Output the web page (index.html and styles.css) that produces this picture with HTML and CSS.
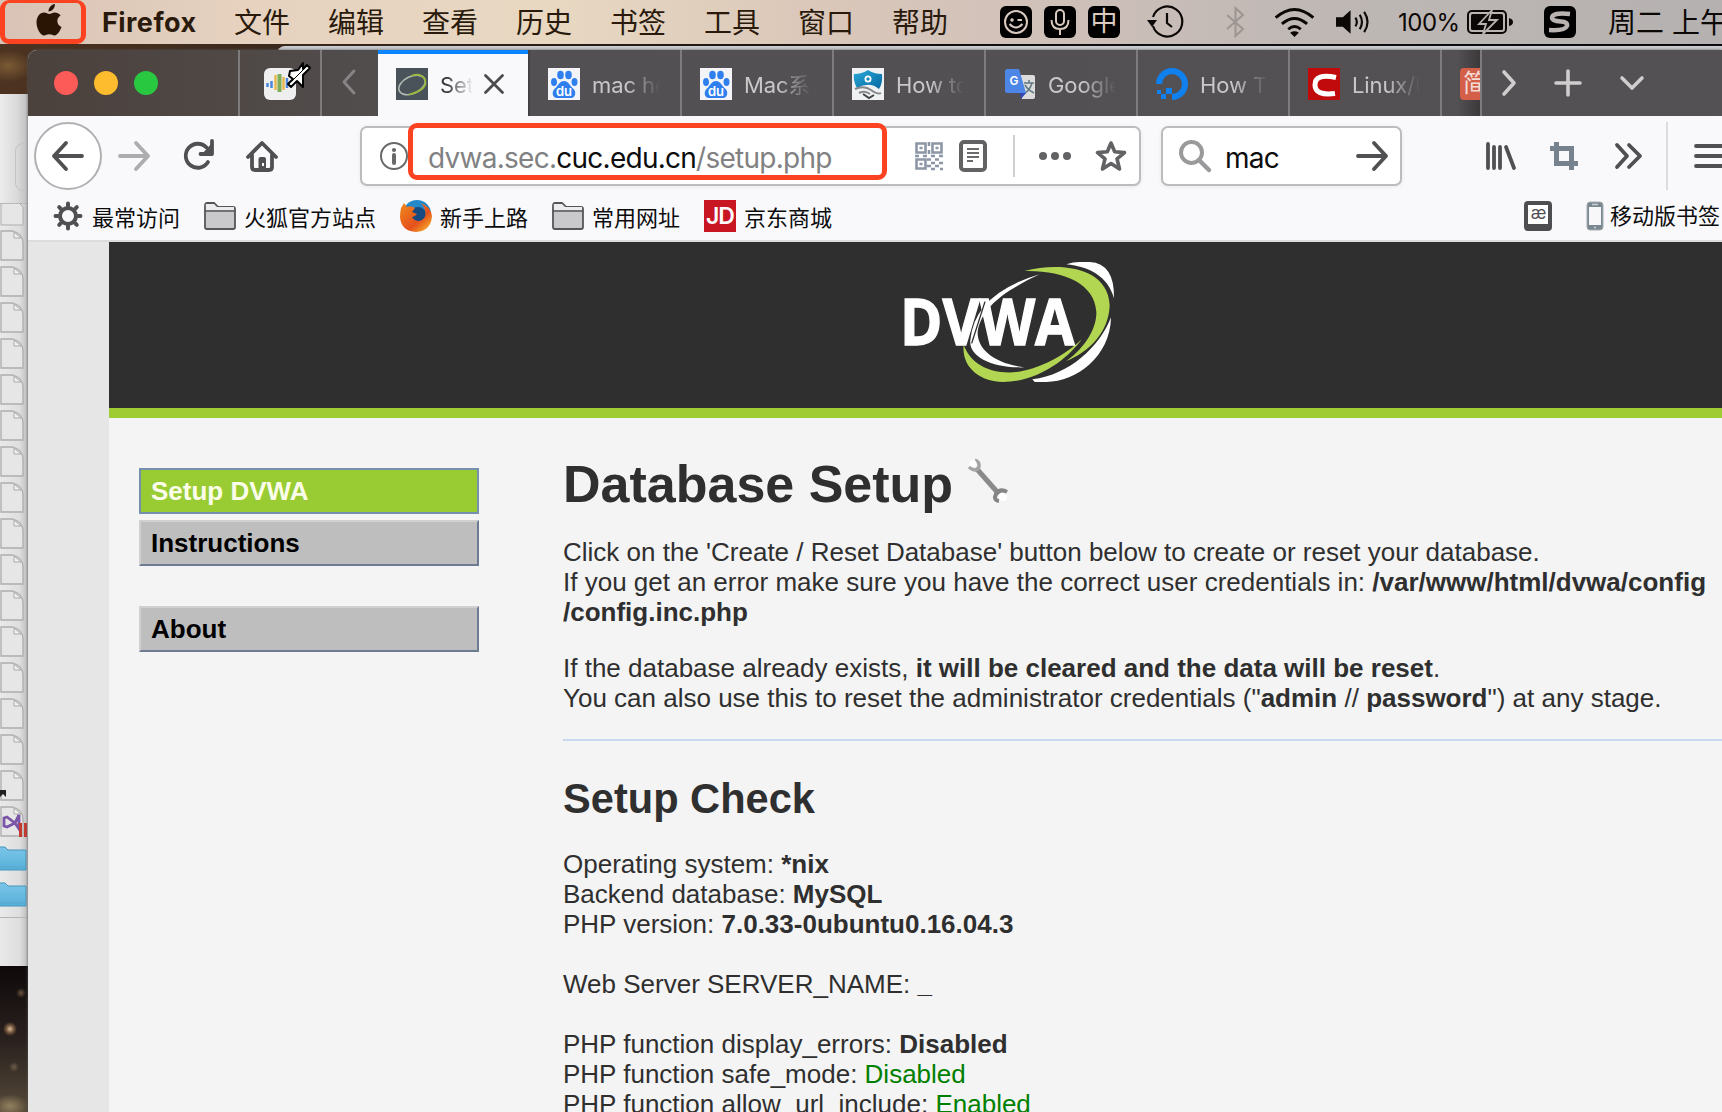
FILE: index.html
```
<!DOCTYPE html>
<html lang="zh-CN">
<head>
<meta charset="utf-8">
<title>Database Setup</title>
<link rel="stylesheet" href="styles.css">
</head>
<body>
<svg class="defs" width="0" height="0">
  <defs>
    <linearGradient id="blueFolder" x1="0" y1="0" x2="0" y2="1"><stop offset="0" stop-color="#7cc6ea"/><stop offset="1" stop-color="#55afd8"/></linearGradient>
    <linearGradient id="shield" x1="0" y1="0" x2="1" y2="1"><stop offset="0" stop-color="#2ba9d8"/><stop offset="1" stop-color="#0568a0"/></linearGradient>
    <linearGradient id="fox" x1="0" y1="0" x2="1" y2="1"><stop offset="0" stop-color="#f08a1c"/><stop offset=".6" stop-color="#e5501d"/><stop offset="1" stop-color="#fbc62c"/></linearGradient>
    <symbol id="file" viewBox="0 0 24 31"><path d="M1 1H13Q23 4 23 13V30H1Z" fill="#e6e6e6" stroke="#adadad" stroke-width="1.3"/><path d="M14 2V8H21Z" fill="#f1f1f1" stroke="#aaa"/></symbol>
    <symbol id="bfolder" viewBox="0 0 28 25"><path d="M-2 1H5L8 4H26V24H-2Z" fill="url(#blueFolder)" stroke="#4696bb"/><path d="M-2 21H26" stroke="#5ba5c8"/></symbol>
    <symbol id="folder" viewBox="0 0 32 28"><path d="M1 4Q1 1 3 1H10L14 5H29Q31 5 31 7V25Q31 27 29 27H3Q1 27 1 25Z" fill="#c9c9cb" stroke="#555557" stroke-width="1.8"/><path d="M1.8 2H10L13 5H30V8H2Z" fill="#ececee"/><path d="M1 9H31" stroke="#555557" stroke-width="1.6"/></symbol>
    <symbol id="baidu" viewBox="0 0 32 32"><path d="M0 0H32V32H0Z" fill="#f2f4f8"/><g fill="#2f80ee"><ellipse cx="12.5" cy="7" rx="3.3" ry="4.2"/><ellipse cx="20.5" cy="7" rx="3.3" ry="4.2"/><ellipse cx="6" cy="14" rx="3" ry="4"/><ellipse cx="26.5" cy="14" rx="3" ry="4"/><path d="M16 13C20 13 21 16 24 19.500C29 23 28 30 23 30H9C4 30 3 23 8 19.500C11 16 12 13 16 13Z"/></g><text x="16" y="28" text-anchor="middle" font-family="Inter" font-weight="600" font-size="13" fill="#fff">du</text></symbol>
  </defs>
</svg>

<header class="menubar">
  <svg class="apple" viewBox="0 0 26 32"><path d="M19 0C19 4 16 7.500 12.500 7.500C12.500 3.500 15.500 .5 19 0ZM18.500 8.500C21 8.500 23.300 9.800 24.600 11.600C19.700 14.600 20.600 21 25.500 23C24.500 26 21.500 31.500 18.500 31.500C16.500 31.500 15.800 30.300 13.300 30.300C10.800 30.300 10 31.500 8 31.500C4.500 31.500 .5 24.500 .5 18.500C.5 12.500 4 8.500 8 8.500C10.300 8.500 11.800 10 13.500 10C15 10 16.500 8.500 18.500 8.500Z" fill="#2a1505"/></svg>
  <b class="app">Firefox</b>
  <nav class="menus"><span>文件</span><span>编辑</span><span>查看</span><span>历史</span><span>书签</span><span>工具</span><span>窗口</span><span>帮助</span></nav>
  <div class="ime">
    <svg viewBox="0 0 32 32"><rect width="32" height="32" rx="6"/><circle cx="16" cy="16" r="11" class="l"/><circle cx="12" cy="14" r="1.800" fill="#d9c9bf"/><path d="M17.500 14H22M9.500 18Q16 25 22.500 18" class="l"/></svg>
    <svg viewBox="0 0 32 32"><rect width="32" height="32" rx="6"/><rect x="12" y="4" width="8" height="15" rx="4" class="l"/><path d="M7.500 14Q7.500 23 16 23Q24.500 23 24.500 14M16 23V29" class="l"/></svg>
    <span class="zhong">中</span>
  </div>
  <svg class="clock" viewBox="0 0 36 32" fill="none" stroke="#0c0806" stroke-width="2.200"><path d="M6 20A15 15 0 1 0 6 11" /><path d="M20 7V17L25 21"/><path d="M0 14H10L5 21Z" fill="#0c0806" stroke="none"/></svg>
  <svg class="bt" viewBox="0 0 18 32" fill="none" stroke="#9c9591" stroke-width="2"><path d="M1 9L17 23L9.500 30V2L17 9L1 23"/></svg>
  <svg class="wifi" viewBox="0 0 42 30" fill="none" stroke="#0c0806" stroke-width="3"><path d="M1.500 10Q21-7 40.500 10M8 16.500Q21 5 34 16.500M14.500 22Q21 16.500 27.500 22"/><path d="M16.500 25.500Q21 22.500 25.500 25.500L21 30Z" fill="#0c0806" stroke="none"/></svg>
  <svg class="vol" viewBox="0 0 34 24" fill="none" stroke="#0c0806" stroke-width="2.200"><path d="M0 7H7L15 0V24L7 17H0Z" fill="#0c0806" stroke="none"/><path d="M20 7.500Q23 12 20 16.500M24.500 4.500Q29 12 24.500 19.500M29 1.500Q36 12 29 22.500"/></svg>
  <span class="pct">100%</span>
  <svg class="batt" viewBox="0 0 46 24"><rect x="1" y="1" width="38" height="22" rx="4" fill="none" stroke="#0c0806" stroke-width="2"/><rect x="4" y="4" width="32" height="16" rx="1.500" fill="#0c0806"/><path d="M42 8Q46 9 46 12Q46 15 42 16Z" fill="#0c0806"/><path d="M25 0L12 14H19L16 24L30 10H22Z" fill="#0c0806" stroke="#b9b3b0" stroke-width="1.800"/></svg>
  <svg class="sogou" viewBox="0 0 32 32"><rect width="32" height="32" rx="6"/><path d="M26 8Q8 6 8 12Q8 15 17 15.500Q24 16 23 20Q21 25 5 24" fill="none" stroke="#b8b2b0" stroke-width="4.500"/></svg>
  <span class="date">周二 上午</span>
</header>
<div class="mark mark-apple"></div>

<div class="backwin-edge"></div>
<aside class="finder">
  <div class="finder-bar"></div>
  <svg class="cutfile" viewBox="0 0 24 22"><path d="M1-4V21H23V3L20 0" fill="#e6e6e6" stroke="#adadad"/></svg>
  <div class="files">
    <svg><use href="#file"/></svg><svg><use href="#file"/></svg><svg><use href="#file"/></svg><svg><use href="#file"/></svg><svg><use href="#file"/></svg><svg><use href="#file"/></svg><svg><use href="#file"/></svg><svg><use href="#file"/></svg><svg><use href="#file"/></svg><svg><use href="#file"/></svg><svg><use href="#file"/></svg><svg><use href="#file"/></svg><svg><use href="#file"/></svg><svg><use href="#file"/></svg><svg><use href="#file"/></svg>
    <svg viewBox="0 0 24 31"><use href="#file" width="24" height="31"/><path d="M0 20H6V27L3 24L0 27Z" fill="#222"/></svg>
    <svg class="vs" viewBox="0 0 28 31"><use href="#file" width="24" height="31"/><path d="M4 12L7 11L15 17L19 9V23L15 17L7 21L4 20Z" fill="none" stroke="#7a55a8" stroke-width="2.800"/><path d="M19 17H22V31H19ZM24 17H27V31H24Z" fill="#c43a30"/></svg>
  </div>
  <div class="bfolders"><svg><use href="#bfolder"/></svg><svg><use href="#bfolder"/></svg></div>
</aside>

<main class="window">
  <div class="tabstrip">
    <div class="lights"><i class="r"></i><i class="y"></i><i class="g"></i></div>
    <div class="pinned">
      <svg viewBox="0 0 48 40"><rect x="0" y="6" width="32" height="32" rx="6" fill="#efefef"/><g stroke-width="2.500"><path d="M3.500 21V25M7.500 19V26M23 16V26" stroke="#4c86d8"/><path d="M11.500 13V28M19.500 15V28" stroke="#e6b84e"/><path d="M15.500 12V30" stroke="#7fae5a" stroke-width="4"/></g><path d="M26 9L34 8L39 1V7L43 3L46 6L39 13V25L33 19L27 25L24 22L29 17L25 14Z" fill="#fff" stroke="#000" stroke-width="2" stroke-linejoin="round"/><path d="M28 19L42 5" stroke="#000" stroke-width="1"/></svg>
    </div>
    <div class="scroll-left"><svg viewBox="0 0 14 26"><path d="M12 2L2 13L12 24" fill="none" stroke="#858385" stroke-width="3" stroke-linecap="round" stroke-linejoin="round"/></svg></div>
    <div class="tab active">
      <svg class="fav" viewBox="0 0 32 32"><path d="M0 0H32V32H0Z" fill="#4a525a"/><g fill="none" transform="rotate(-25 16 17)"><ellipse cx="16" cy="17" rx="14" ry="8.500" stroke="#b4bab4" stroke-width="1.600"/><path d="M9 24.500Q30 28 30 17Q29 9 19 8.500" stroke="#98b83c" stroke-width="1.800"/></g></svg>
      <span class="label">Setup</span>
      <svg class="close" viewBox="0 0 20 20"><path d="M1.500 1.500L18.500 18.500M18.500 1.500L1.500 18.500" stroke="#4b4b4d" stroke-width="2.800" stroke-linecap="round"/></svg>
    </div>
    <div class="tab"><svg class="fav"><use href="#baidu"/></svg><span class="label">mac hosts</span></div>
    <div class="tab"><svg class="fav"><use href="#baidu"/></svg><span class="label">Mac系统</span></div>
    <div class="tab"><svg class="fav" viewBox="0 0 32 32"><path d="M0 0H32V32H0Z" fill="#f0f1f2"/><path d="M2 6Q10 6 16 2Q22 6 30 6Q31 15 27 21Q18 13 5 20Q1 13 2 6Z" fill="url(#shield)"/><circle cx="16" cy="11" r="2.600" fill="none" stroke="#fff" stroke-width="1.800"/><path d="M3 21Q12 17 19 22T29 25M7 25Q13 22 18 26" fill="none" stroke="#85878a" stroke-width="2"/><path d="M11 26L17 30L22 27" fill="none" stroke="#444" stroke-width="2"/></svg><span class="label">How to</span></div>
    <div class="tab"><svg class="fav" viewBox="0 0 32 32"><path d="M15 7H29Q31 7 31 9V29Q31 31 29 31H18Z" fill="#dcdcdc"/><path d="M20 15H30M25 12V15M28 15Q26 22 20 26M21 17Q24 22 30 25" fill="none" stroke="#617883" stroke-width="1.500"/><path d="M16 25H22L17 31Z" fill="#3049b5"/><path d="M3 1H15L22 25H3Q1 25 1 23V3Q1 1 3 1Z" fill="#4d86e6"/><text x="10" y="17" text-anchor="middle" font-family="Inter" font-weight="600" font-size="12" fill="#fff">G</text></svg><span class="label">Google</span></div>
    <div class="tab"><svg class="fav" viewBox="0 0 32 32"><path d="M3 16A13 13 0 1 1 16 29" fill="none" stroke="#1080ee" stroke-width="6"/><path d="M10 20H16V26H10ZM5 26H10V31H5ZM1 22H5V26H1Z" fill="#1080ee"/></svg><span class="label">How To</span></div>
    <div class="tab"><svg class="fav" viewBox="0 0 32 32"><path d="M0 0H32V32H0Z" fill="#c00a0c"/><path d="M28 9.500Q7 5 7 17Q7 28 27 25.500" fill="none" stroke="#fff" stroke-width="5"/></svg><span class="label">Linux/Unix</span></div>
    <div class="tab cut"><span class="jian">简</span></div>
    <div class="strip-tools">
      <svg viewBox="0 0 14 26" width="14" height="26"><path d="M2 2L12 13L2 24"/></svg>
      <svg viewBox="0 0 28 28" width="28" height="28"><path d="M14 2V26M2 14H26"/></svg>
      <svg viewBox="0 0 24 16" width="24" height="16"><path d="M2 3L12 13L22 3"/></svg>
    </div>
  </div>

  <div class="navbar">
    <div class="back"><svg viewBox="0 0 32 30" width="32" height="30"><path d="M30 15H2M14 2L2 15L14 28" class="s"/></svg></div>
    <svg class="fwd" viewBox="0 0 32 30"><path d="M2 15H30M18 2L30 15L18 28" class="s"/></svg>
    <svg class="reload" viewBox="0 0 30 30"><path d="M24 21A12 12 0 1 1 22.500 6.500" class="s" stroke-width="3.800"/><path d="M28 0V13H16.500" class="s" stroke-width="3.600"/><path d="M28 2V13H18Z" fill="#505052"/></svg>
    <svg class="home" viewBox="0 0 32 32"><path d="M2 17L16 3L30 17" class="s" stroke-width="3.600"/><path d="M6 15V27Q6 30 9 30H23Q26 30 26 27V15" class="s" stroke-width="3.600"/><path d="M12.500 31V19Q12.500 17 14.500 17H18Q20 17 20 19V31Z" fill="#505052"/><path d="M16 23H18V26H16Z" fill="#fff"/></svg>
    <div class="urlbar">
      <svg class="info" viewBox="0 0 28 28"><circle cx="14" cy="14" r="13" fill="none" stroke="#69696b" stroke-width="2"/><circle cx="14" cy="8" r="2.100" fill="#69696b"/><path d="M14 13V21" stroke="#69696b" stroke-width="4" stroke-linecap="round"/></svg>
      <span class="url">dvwa.sec.<em>cuc.edu.cn</em>/setup.php</span>
      <svg class="qr" viewBox="0 0 28 28" fill="none" stroke="#8d96a6" stroke-width="2.600"><path d="M1.500 1.500H10.500V10.500H1.500ZM17.500 1.500H26.500V10.500H17.500ZM1.500 17.500H10.500V26.500H1.500Z"/><path d="M4.500 6H7.500M20.500 6H23.500M4.500 22H7.500M14 0V4M14 8V12M0 14H4M8 14H12M16 14H20M24 14H28M12 17.500H16M20 17.500H24M16 21H20M24 21H28M12 24H16M20 24H24M16 27H20M25 27H28"/></svg>
      <svg class="reader" viewBox="0 0 28 32"><rect x="2" y="2" width="24" height="28" rx="3" fill="#fff" stroke="#626264" stroke-width="4"/><path d="M8 9H20M8 13H20M8 17H20M8 21H14" stroke="#6a6a6c" stroke-width="1.800"/></svg>
      <i class="vline"></i>
      <svg class="dots" viewBox="0 0 32 8" fill="#626264"><circle cx="4" cy="4" r="4"/><circle cx="16" cy="4" r="4"/><circle cx="28" cy="4" r="4"/></svg>
      <svg class="star" viewBox="0 0 32 32"><path d="M16 3L19.700 11.800L29.500 12.600L22 18.800L24.500 29L16 23.600L7.500 29L10 18.800L2.500 12.600L12.300 11.800Z" fill="none" stroke="#626264" stroke-width="3.600" stroke-linejoin="round"/></svg>
      <div class="mark mark-url"></div>
    </div>
    <div class="search">
      <svg class="mag" viewBox="0 0 32 32" fill="none" stroke="#9a9a9c"><circle cx="12.500" cy="12.500" r="10.500" stroke-width="4"/><path d="M20 20L30 30" stroke-width="4.500" stroke-linecap="round"/></svg>
      <span>mac</span>
      <svg class="go" viewBox="0 0 32 30"><path d="M2 15H30M18 2L30 15L18 28" class="s"/></svg>
    </div>
    <svg class="lib" viewBox="0 0 30 28"><path d="M2 2V26M8 5V26M14 5V26M20 5L28 26" class="s"/></svg>
    <svg class="crop" viewBox="0 0 28 28"><path d="M6.500 0V21.500H28M0 6.500H21.500V28" fill="none" stroke="#76828e" stroke-width="5"/></svg>
    <svg class="more" viewBox="0 0 28 26"><path d="M2 2L12 13L2 24M14 2L25 13L14 24" class="s"/></svg>
    <i class="navline"></i>
    <svg class="burger" viewBox="0 0 28 24"><path d="M2 2H28M2 12H28M2 22H28" class="s"/></svg>
  </div>

  <div class="bookmarks">
    <svg class="gear" viewBox="0 0 28 28" fill="none" stroke="#505052"><circle cx="14" cy="14" r="8" stroke-width="4"/><path d="M14 1.500V5M14 23V26.500M1.500 14H5M23 14H26.500M5.200 5.200L7.600 7.600M20.400 20.400L22.800 22.800M22.800 5.200L20.400 7.600M5.200 22.800L7.600 20.400" stroke-width="4" stroke-linecap="round"/></svg>
    <span class="w4">最常访问</span>
    <svg class="fold"><use href="#folder"/></svg><span class="w6">火狐官方站点</span>
    <svg class="ff" viewBox="0 0 32 32"><circle cx="17" cy="14" r="14" fill="#2489c8"/><circle cx="18" cy="15" r="8" fill="#174a80"/><path d="M1 8L4 3L7 7Q11 5 15 8L12 12L17 14Q15 17 12 17Q16 23 22 20Q27 17 25 10Q24 6 21 3Q31 7 32 16Q31 31 16 32Q1 31 0 17Q0 12 1 8Z" fill="url(#fox)"/></svg><span class="w4 a">新手上路</span>
    <svg class="fold"><use href="#folder"/></svg><span class="w4 b">常用网址</span>
    <b class="jd">JD</b><span class="w4">京东商城</span>
    <span class="ae">æ</span>
    <svg class="phone" viewBox="0 0 18 30"><rect x="1" y="1" width="16" height="28" rx="3" fill="#7b8790" stroke="#a5adb3"/><rect x="3" y="6" width="12" height="18" fill="#f7f7fa"/><path d="M6 3.500H12M8 26.500H10" stroke="#c8cdd1" stroke-width="1.500"/></svg>
    <span class="mobile">移动版书签</span>
  </div>

  <div class="viewport">
    <div class="site">
      <div class="banner">
        <svg viewBox="133 66 630 360" width="210" height="120">
          <path d="M540 103Q345 160 332 300C326 350 400 385 495 382C400 370 352 325 354 275C365 200 440 150 540 103Z" fill="#fff"/>
          <path d="M495 93C600 65 745 80 750 195C748 275 690 335 620 363C680 320 712 260 710 215C705 130 610 90 495 93Z" fill="#b2d552"/>
          <path d="M620 73Q640 66 660 66H690Q765 70 763 175C745 110 690 80 620 73Z" fill="#fff"/>
          <path d="M754 232C752 350 650 425 560 426H525L518 418C630 405 720 320 754 232Z" fill="#fff"/>
          <path d="M312 315C340 390 430 415 520 385C580 365 635 330 666 298C630 350 540 426 430 426C360 425 305 380 312 315Z" fill="#b2d552"/>
          <text class="logo-text" x="121" y="314" textLength="524" lengthAdjust="spacingAndGlyphs">DVWA</text>
          <path d="M376 185L336 310" stroke="#2f2f2f" stroke-width="4"/>
        </svg>
      </div>
      <div class="body">
        <ul class="menu"><li class="sel">Setup DVWA</li><li>Instructions</li><li class="gap">About</li></ul>
        <div class="content">
          <h1>Database Setup <svg viewBox="0 0 40 44" width="40" height="44"><path d="M8 10L31 36" stroke="#8a8a8a" stroke-width="5"/><path d="M1 9Q8 15 11 9Q12 4 7 2" fill="none" stroke="#a5a5a5" stroke-width="3.500"/><circle cx="5" cy="5.500" r="3.500" fill="#fff"/><path d="M39 34Q32 30 28 36Q25 42 31 43" fill="none" stroke="#858585" stroke-width="4"/><circle cx="35" cy="39" r="4" fill="#fff"/></svg></h1>
          <p class="intro">Click on the 'Create / Reset Database' button below to create or reset your database.<br>If you get an error make sure you have the correct user credentials in: <b>/var/www/html/dvwa/config<br>/config.inc.php</b></p>
          <p>If the database already exists, <b>it will be cleared and the data will be reset</b>.<br>You can also use this to reset the administrator credentials ("<b>admin</b> // <b>password</b>") at any stage.</p>
          <hr>
          <h2>Setup Check</h2>
          <p>Operating system: <b>*nix</b><br>Backend database: <b>MySQL</b><br>PHP version: <b>7.0.33-0ubuntu0.16.04.3</b><br><br>Web Server SERVER_NAME: <b>_</b><br><br>PHP function display_errors: <b>Disabled</b><br>PHP function safe_mode: <span class="ok">Disabled</span><br>PHP function allow_url_include: <span class="ok">Enabled</span></p>
        </div>
      </div>
    </div>
  </div>
</main>
</body>
</html>
```
FILE: styles.css
```
* { box-sizing: border-box; }
html, body { margin: 0; height: 100%; overflow: hidden; }
body {
  position: relative; width: 1722px; height: 1112px;
  font-family: Inter, "Noto Sans CJK SC", sans-serif;
  background:
    radial-gradient(circle at 21px 993px, #6b5340 0, transparent 5px),
    radial-gradient(circle at 10px 1029px, #d8bd98 0, #6f5138 4px, transparent 7px),
    radial-gradient(circle at 14px 1067px, #6d5c49 0, transparent 5px),
    radial-gradient(ellipse at 10px 1106px, #92805f 0, transparent 18px),
    radial-gradient(ellipse at 8px 66px, #7a5a34 0, transparent 26px),
    linear-gradient(90deg, #4d3321 0, #3a281c 300px, #14100f 900px, #0a0a10) 0 0 / 100% 96px no-repeat,
    linear-gradient(#0c0708 960px, #2a211f 1040px, #554938);
}
svg { display: block; flex: none; overflow: visible; }
.defs { position: absolute; }
i { display: block; }

/* macOS menu bar */
.menubar {
  display: flex; align-items: center; height: 44px; padding-left: 36px;
  overflow: hidden; white-space: nowrap; color: #2a1a0c; font-size: 28px;
  background: linear-gradient(90deg, #d8c3b6 0, #e6d2bf 240px, #e8d8c2 560px, #dbc8ba 800px, #cfc0b9 1060px, #bfb8b5 1300px, #b5b1b0 1722px);
}
.menubar > * { flex: none; }
.apple { width: 26px; height: 32px; margin-top: -4px; }
.app { width: 131px; margin-left: 40px; font-size: 27px; letter-spacing: .45px; }
.menus { display: flex; width: 766px; margin: -3px 0 0 1px; }
.menus span { width: 94px; }
.ime { display: flex; gap: 12px; width: 147px; }
.ime svg, .sogou { width: 32px; height: 32px; }
.ime .l { fill: none; stroke: #d9c9bf; stroke-width: 2; }
.zhong { width: 32px; height: 32px; border-radius: 6px; background: #000; color: #d9c9bf; font-size: 27px; line-height: 31px; text-align: center; }
.clock { width: 36px; height: 32px; }
.bt { width: 18px; height: 32px; margin-left: 43px; }
.wifi { width: 41px; height: 29px; margin-left: 30px; }
.vol { width: 33px; height: 24px; margin-left: 21px; }
.pct { width: 69px; margin-left: 29px; font-size: 24px; color: #0c0806; letter-spacing: -.5px; }
.batt { width: 46px; height: 24px; }
.sogou { margin-left: 31px; }
.date { margin: -3px 0 0 32px; color: #0c0806; }
.mark { position: absolute; border: 5px solid #fb4221; border-radius: 9px; }
.mark-apple { left: 0; top: 0; width: 86px; height: 44px; border-top-width: 3px; }

/* Finder window behind the browser */
.backwin-edge { position: absolute; left: 277px; top: 46px; right: 0; height: 12px; border-radius: 8px 0 0 0; background: #cbccd0; }
.finder { position: absolute; left: 0; top: 94px; width: 28px; height: 872px; overflow: hidden; border-radius: 0; background: linear-gradient(90deg, #e9e9e9, #dedede 70%, #bdbdbd); }
.finder-bar { height: 110px; border-bottom: 1px solid #b8b8b8; background: linear-gradient(90deg, #ececec, #dadada 60%, #bfbfbf); }
.finder-bar::after { content: ""; display: block; width: 30px; height: 46px; margin-left: 15px; border: 1px solid #c4c4c4; border-radius: 8px; position: relative; top: 49px; }
.cutfile { width: 24px; height: 22px; overflow: hidden; }
.files { display: flex; flex-direction: column; gap: 5px; margin-top: 4px; }
.files svg { width: 24px; height: 31px; }
.files .vs { width: 28px; }
.bfolders { display: flex; flex-direction: column; gap: 11px; margin-top: 9px; padding-bottom: 10px; border-bottom: 1px solid #b5b5b5; }
.bfolders svg { width: 28px; height: 25px; }

/* Browser window */
.window { position: absolute; left: 28px; top: 50px; width: 1694px; height: 1062px; display: flex; flex-direction: column; overflow: hidden; border-radius: 9px 0 0 0; background: #f9f9fb; box-shadow: 0 0 3px #555; }
.window > * { flex: none; }
.tabstrip { display: flex; height: 66px; background: linear-gradient(90deg, #4b413d 0, #4f4845 200px, #525052 420px, #535153); }
.tabstrip > * { flex: none; border-right: 2px solid #7d7b7c; }
.lights { display: flex; gap: 16px; width: 212px; padding: 21px 0 0 26px; }
.lights i { width: 24px; height: 24px; border-radius: 50%; }
.r { background: #fc5b57; } .y { background: #fdbc2e; } .g { background: #28c840; }
.pinned { width: 82px; padding: 12px 0 0 24px; }
.pinned svg { width: 48px; height: 40px; }
.tabstrip .scroll-left { width: 56px; padding: 19px 0 0 20px; border: 0; }
.scroll-left svg { width: 14px; height: 26px; }
.tab { display: flex; align-items: center; width: 152px; padding: 2px 0 0 18px; color: #c9c7c8; font-size: 22px; line-height: 30px; letter-spacing: -.1px; }
.fav { width: 32px; height: 32px; }
.label { width: 68px; height: 30px; margin: 1px 0 0 12px; overflow: hidden; white-space: nowrap; -webkit-mask-image: linear-gradient(90deg, #000 50%, transparent 100%); mask-image: linear-gradient(90deg, #000 50%, transparent 100%); }
.tab.active { padding-top: 2px; border-right-color: #434143; color: #38383a; background: linear-gradient(#0a84ff 4px, #f9f9fb 4px); }
.active .label { width: 34px; -webkit-mask-image: linear-gradient(90deg, #000 20%, transparent 98%); mask-image: linear-gradient(90deg, #000 20%, transparent 98%); }
.close { width: 20px; height: 20px; margin-left: 10px; }
.tab.cut { width: 40px; overflow: hidden; background: linear-gradient(90deg, transparent 40%, #3b393a); }
.jian { flex: none; width: 32px; height: 32px; border-radius: 4px; background: #d35f49; color: #f4dcd5; font-size: 25px; line-height: 31px; padding-left: 3px; }
.tabstrip .strip-tools { display: flex; align-items: center; gap: 38px; padding-left: 20px; border: 0; }
.strip-tools path { fill: none; stroke: #cfcdce; stroke-width: 3.6; stroke-linecap: round; stroke-linejoin: round; }

.navbar { display: flex; align-items: center; height: 74px; padding: 6px 0 0 6px; }
.navbar > * { flex: none; }
.s { fill: none; stroke: #505052; stroke-width: 3.800; stroke-linecap: round; stroke-linejoin: round; }
.back { display: flex; align-items: center; justify-content: center; width: 68px; height: 68px; border: 2px solid #b1b1b3; border-radius: 50%; background: #fff; }
.fwd { width: 32px; height: 30px; margin-left: 16px; opacity: .45; }
.reload { width: 30px; height: 30px; margin-left: 34px; }
.home { width: 32px; height: 32px; margin-left: 32px; }
.urlbar { position: relative; display: flex; align-items: center; width: 781px; height: 60px; margin-left: 82px; padding-left: 18px; border: 2px solid #bcbcbe; border-radius: 7px; background: #fff; box-shadow: 0 1px 4px #0001; }
.info { width: 28px; height: 28px; }
.url { width: 487px; margin: 4px 0 0 20px; color: #818183; font-size: 28px; letter-spacing: -.74px; white-space: nowrap; }
.url em { font-style: normal; color: #0c0c0d; }
.qr { width: 28px; height: 28px; }
.reader { width: 28px; height: 32px; margin-left: 16px; }
.vline { width: 2px; height: 42px; margin-left: 26px; background: #d0d0d2; }
.dots { width: 32px; height: 8px; margin-left: 24px; }
.star { width: 32px; height: 32px; margin-left: 24px; }
.mark-url { left: 46px; top: -5px; width: 479px; height: 57px; }
.search { display: flex; align-items: center; width: 241px; height: 60px; margin-left: 20px; padding-left: 16px; border: 2px solid #bcbcbe; border-radius: 7px; background: #fff; box-shadow: 0 1px 4px #0001; font-size: 28px; letter-spacing: -.7px; color: #0c0c0d; }
.search span { width: 131px; margin: 4px 0 0 14px; }
.mag { width: 32px; height: 32px; }
.go { width: 32px; height: 30px; }
.lib { width: 30px; height: 28px; margin-left: 84px; }
.crop { width: 28px; height: 28px; margin-left: 34px; }
.more { width: 28px; height: 26px; margin-left: 37px; }
.navline { width: 2px; height: 68px; margin-left: 23px; background: #dcdcde; }
.burger { width: 28px; height: 24px; margin-left: 26px; }

.bookmarks { display: flex; align-items: center; height: 52px; padding: 2px 0 0 26px; border-bottom: 2px solid #dcdcde; font-size: 22px; color: #0c0c0d; white-space: nowrap; }
.bookmarks > * { flex: none; }
.gear { width: 28px; height: 28px; }
.bookmarks span { margin-left: 10px; }
.bookmarks .w4 { width: 112px; }
.bookmarks .w6 { width: 156px; margin-left: 8px; }
.bookmarks .a { width: 112px; margin-left: 8px; }
.bookmarks .b { width: 112px; margin-left: 8px; }
.fold { width: 32px; height: 28px; }
.ff { width: 32px; height: 32px; }
.jd { width: 32px; height: 32px; background: #c81623; color: #fff; font-size: 23px; font-weight: 600; line-height: 33px; text-align: center; letter-spacing: -1px; }
.bookmarks .jd + .w4 { margin-left: 8px; width: 780px; }
.bookmarks .ae { width: 28px; height: 30px; margin: 0; border: 4px solid #4e4e50; border-bottom-width: 7px; border-radius: 4px; background: #fff; color: #4e4e50; font-size: 17px; line-height: 17px; letter-spacing: -1px; text-align: center; }
.phone { width: 18px; height: 30px; margin-left: 34px; }
.bookmarks .mobile { margin: -5px 0 0 6px; }

/* DVWA page */
.viewport { height: 870px; padding-left: 81px; background: #e6e6e6; }
.site { height: 870px; background: #f4f4f4; font-family: "Liberation Sans", Arial, sans-serif; color: #2f2f2f; overflow: hidden; }
.banner { height: 176px; padding: 20px 0 0 795px; border-bottom: 10px solid #a0cc33; background: #2f2f2f; }
.logo-text { font: 700 196px "Open Sans", sans-serif; fill: #fff; stroke: #fff; stroke-width: 4px; }
.body { display: flex; padding-left: 30px; }
.menu { width: 340px; margin: 50px 84px 0 0; padding: 0; list-style: none; }
.menu li { height: 46px; margin-bottom: 6px; padding-left: 10px; border: 2px solid; border-color: #d0d0d0 #6c7a92 #6c7a92 #d0d0d0; background: #bebebe; color: #000; font-size: 26px; font-weight: bold; line-height: 42px; }
.menu .sel { border-color: #7590ae; background: #9c3; color: #fbfdea; }
.menu .gap { margin-top: 40px; }
.content { flex: 1; font-size: 26px; line-height: 30px; white-space: nowrap; }
h1 { display: flex; margin: 36px 0 0; font-size: 52px; line-height: 60px; gap: 15px; }
h1 svg { margin-top: 4px; }
.content p { margin: 0; }
.content .intro { margin-top: 23px; }
p + p { padding-top: 26px; }
hr { height: 2px; margin: 26px 0 0; border: 0; background: #c8d8f0; }
h2 { margin: 34px 0 0; font-size: 41.6px; line-height: 48px; }
h2 + p { padding-top: 26px; }
.ok { color: #008000; }
```
